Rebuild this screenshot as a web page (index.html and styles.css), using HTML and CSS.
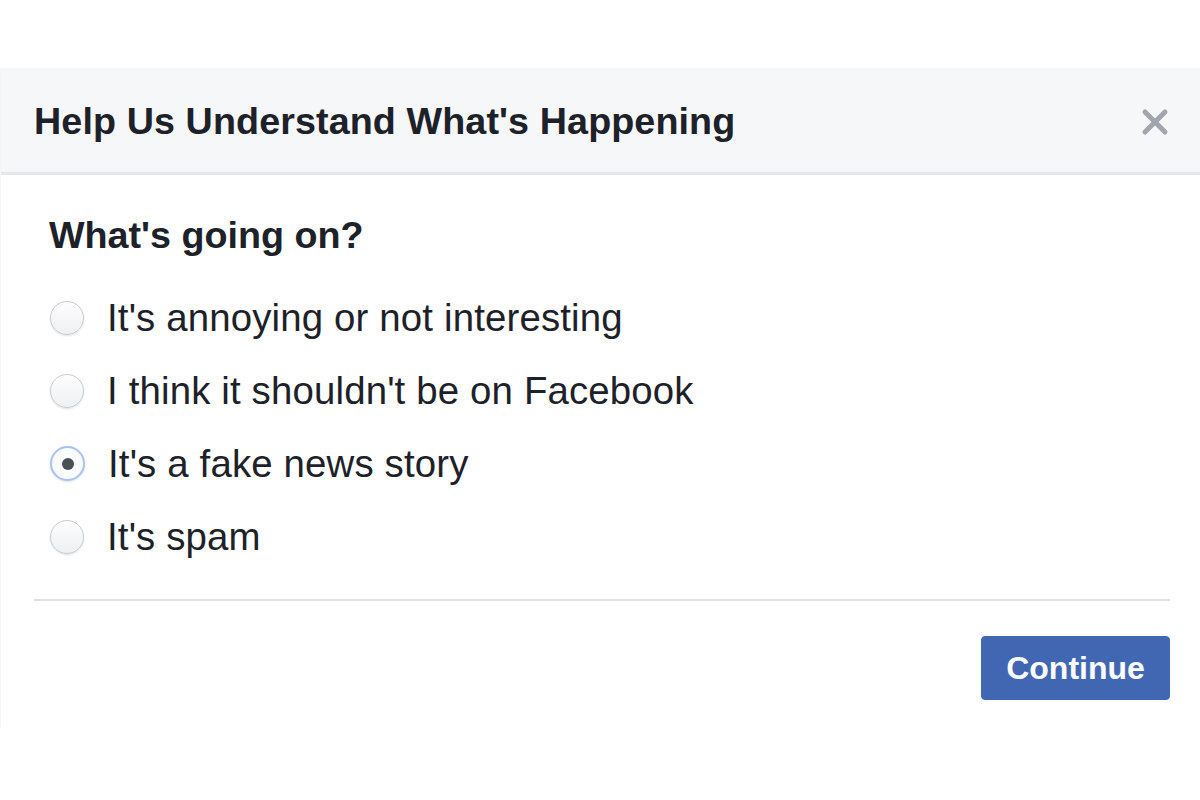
FILE: index.html
```html
<!DOCTYPE html>
<html lang="en">
<head>
<meta charset="utf-8">
<title>Help Us Understand What's Happening</title>
<link rel="stylesheet" href="styles.css">
</head>
<body>
<div class="dialog">
  <div class="dialog-header">
    <h1 class="dialog-title">Help Us Understand What's Happening</h1>
    <button class="close-btn" aria-label="Close">
      <svg width="28" height="28" viewBox="0 0 28 28"><path d="M4 4 L24 24 M24 4 L4 24" stroke="#a2a5ac" stroke-width="5" stroke-linecap="round" fill="none"/></svg>
    </button>
  </div>
  <div class="dialog-body">
    <div class="question">What's going on?</div>
    <div class="options">
      <label class="option"><span class="radio"></span><span class="option-text">It's annoying or not interesting</span></label>
      <label class="option"><span class="radio"></span><span class="option-text">I think it shouldn't be on Facebook</span></label>
      <label class="option"><span class="radio radio-checked"><span class="dot"></span></span><span class="option-text">It's a fake news story</span></label>
      <label class="option"><span class="radio"></span><span class="option-text">It's spam</span></label>
    </div>
  </div>
  <div class="separator"></div>
  <div class="dialog-footer">
    <button class="continue-btn">Continue</button>
  </div>
</div>
</body>
</html>
```

FILE: styles.css
```css
html, body {
  margin: 0;
  padding: 0;
  background: #ffffff;
}
body {
  font-family: "Liberation Sans", Arial, Helvetica, sans-serif;
  color: #1d2129;
  width: 1200px;
  height: 800px;
  overflow: hidden;
}
.dialog {
  margin-top: 68px;
  height: 660px;
  display: flex;
  flex-direction: column;
  border-left: 1px solid #f4f5f7;
  background: #fff;
}
.dialog-header {
  height: 104px;
  background: #f6f7f9;
  border-bottom: 3px solid #e6e7ea;
  display: flex;
  align-items: center;
  justify-content: space-between;
  padding: 0 31px 0 33px;
}
.dialog-title {
  margin: 0;
  margin-top: 2px;
  font-size: 37.7px;
  font-weight: bold;
  line-height: 44px;
  color: #1d2129;
  letter-spacing: 0.1px;
}
.close-btn {
  background: none;
  border: none;
  padding: 0;
  margin-top: 4px;
  width: 28px;
  height: 28px;
  display: flex;
}
.dialog-body {
  padding: 38px 0 0 48px;
  display: flex;
  flex-direction: column;
}
.question {
  font-size: 37.7px;
  font-weight: bold;
  line-height: 44px;
  height: 44px;
}
.options {
  margin-top: 24px;
  display: flex;
  flex-direction: column;
}
.option {
  height: 73px;
  display: flex;
  align-items: center;
  gap: 23px;
}
.radio {
  width: 32px;
  height: 32px;
  border-radius: 50%;
  border: 1px solid #c8ccd2;
  background: linear-gradient(#fdfdfd, #eef0f2);
  box-shadow: 0 1px 2px rgba(0,0,0,0.12);
  box-sizing: content-box;
  display: flex;
  align-items: center;
  justify-content: center;
  flex: none;
  margin-left: 1px;
}
.radio-checked {
  border: 2px solid #a9c2f4;
  width: 31px;
  height: 31px;
  background: #fafbfc;
}
.dot {
  width: 12px;
  height: 12px;
  border-radius: 50%;
  background: #4b4f56;
}
.option-text {
  font-size: 38.4px;
  line-height: 44px;
  color: #1d2129;
  letter-spacing: 0.15px;
}
.separator {
  margin: 26px 30px 0 33px;
  height: 2px;
  background: #dddfe2;
}
.dialog-footer {
  display: flex;
  justify-content: flex-end;
  padding: 35px 30px 0 0;
}
.continue-btn {
  width: 189px;
  height: 64px;
  background: #4267b2;
  border: 1px solid #4267b2;
  border-radius: 4px;
  color: #ffffff;
  font-family: "Liberation Sans", Arial, Helvetica, sans-serif;
  font-size: 32px;
  font-weight: bold;
  padding: 0;
}
```
